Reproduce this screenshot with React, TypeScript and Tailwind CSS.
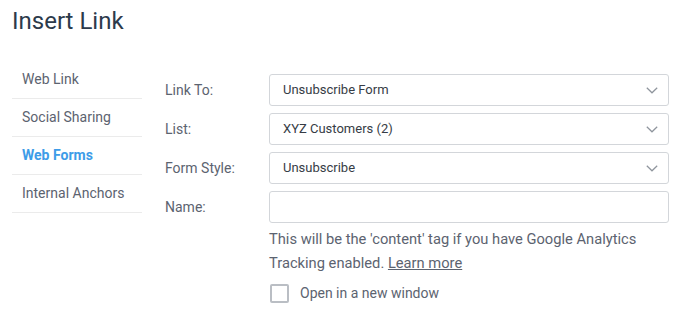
import { useState } from "react";

const tabs = ["Web Link", "Social Sharing", "Web Forms", "Internal Anchors"];

function Chevron() {
  return (
    <svg width="12" height="7" viewBox="0 0 12 7" fill="none" className="shrink-0">
      <polyline points="0.8,0.8 6,5.8 11.2,0.8" stroke="#8f959d" strokeWidth="1.2" />
    </svg>
  );
}

function SelectBox({ value }: { value: string }) {
  return (
    <div className="flex h-[32px] w-[400px] items-center justify-between rounded-[3px] border border-[#d3d6da] bg-white pl-[13px] pr-[10px]">
      <span className="text-[13px] text-[#363c45]">{value}</span>
      <Chevron />
    </div>
  );
}

export default function App() {
  const [active, setActive] = useState("Web Forms");
  const [checked, setChecked] = useState(false);

  const rows = [
    { label: "Link To:", value: "Unsubscribe Form" },
    { label: "List:", value: "XYZ Customers (2)" },
    { label: "Form Style:", value: "Unsubscribe" },
  ];

  return (
    <div className="h-[320px] w-[685px] bg-white pl-[12px] font-['Roboto',sans-serif]">
      <h1 className="pt-[5px] text-[24px] leading-8 text-[#2c3a4b]">Insert Link</h1>

      <div className="mt-[24px] flex">
        {/* Sidebar tabs */}
        <ul className="w-[130px]">
          {tabs.map((t) => (
            <li
              key={t}
              onClick={() => setActive(t)}
              className={`flex h-[38px] cursor-pointer items-center border-b border-[#ebebeb] pl-[10px] text-[14px] ${
                active === t ? "font-bold text-[#3d9ce8]" : "text-[#5c6370]"
              }`}
            >
              {t}
            </li>
          ))}
        </ul>

        {/* Form */}
        <div className="ml-[23px] mt-[13px] flex flex-col gap-[7px]">
          {rows.map((r) => (
            <div key={r.label} className="flex items-center">
              <label className="w-[104px] text-[14px] text-[#5c6370]">{r.label}</label>
              <SelectBox value={r.value} />
            </div>
          ))}
          <div className="flex items-center">
            <label className="w-[104px] text-[14px] text-[#5c6370]">Name:</label>
            <input className="h-[32px] w-[400px] rounded-[3px] border border-[#d3d6da] bg-white px-[13px] text-[13px] outline-none" />
          </div>
          <div className="ml-[104px] w-[400px]">
            <p className="-mt-[3px] text-[14.7px] leading-[24px] text-[#5c6370]">
              This will be the 'content' tag if you have Google Analytics Tracking enabled.{" "}
              <a className="underline">Learn more</a>
            </p>
            <label className="mt-[8px] flex cursor-pointer items-center">
              <span
                onClick={() => setChecked(!checked)}
                className="ml-[1px] h-[19px] w-[19px] rounded-[2px] border-2 border-[#babec4] bg-white"
              />
              <span className="ml-[11px] text-[14px] text-[#5c6370]">Open in a new window</span>
            </label>
          </div>
        </div>
      </div>
    </div>
  );
}
